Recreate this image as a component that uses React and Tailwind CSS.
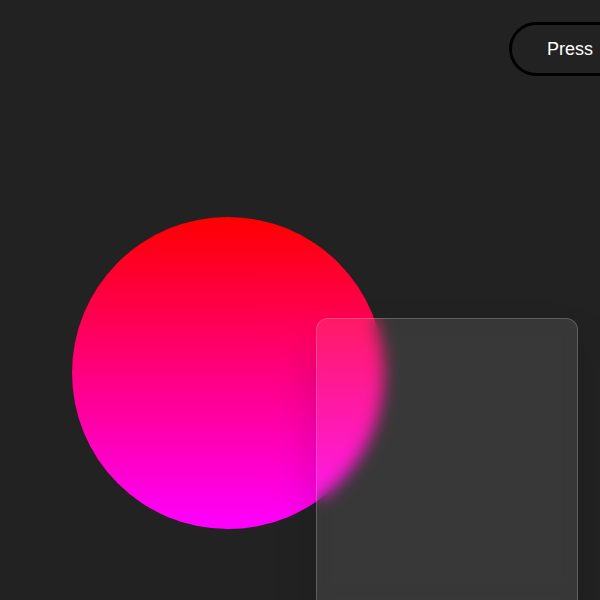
import React from 'react';

export default function App() {
  return (
    <div
      className="relative w-[600px] h-[600px] overflow-hidden bg-[#222222]"
      style={{ fontFamily: '"Liberation Sans", Arial, sans-serif' }}
    >
      <div className="pt-[22px] pl-[509px] whitespace-nowrap">
        <button
          type="button"
          className="h-[54px] w-[160px] rounded-full border-[3px] border-black bg-[#222222] pl-[35px] text-left text-[18px] text-white"
        >
          Press
        </button>
      </div>

      {/* gradient ball */}
      <div className="absolute left-[72px] top-[217px] h-[312px] w-[312px] rounded-full bg-[linear-gradient(#ff0000,#ff00ff)]" />

      {/* glass card */}
      <div className="absolute left-[316px] top-[318px] h-[340px] w-[262px] rounded-[12px] border border-white/20 bg-white/10 backdrop-blur-[8px] shadow-[0_25px_45px_rgba(0,0,0,0.15)]" />
    </div>
  );
}
